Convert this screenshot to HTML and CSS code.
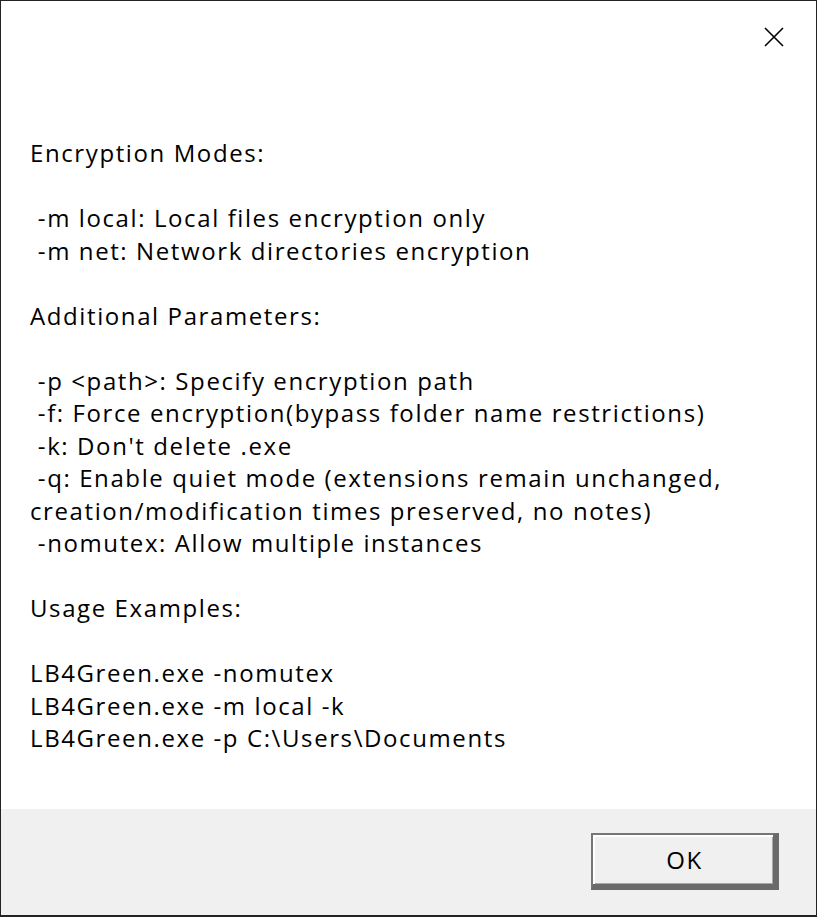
FILE: index.html
```html
<!DOCTYPE html>
<html lang="en">
<head>
<meta charset="utf-8">
<title>LB4Green</title>
<link rel="stylesheet" href="styles.css">
</head>
<body>
<div class="window">
  <div class="content">
    <div class="titlebar">
      <button class="close" aria-label="Close">
        <svg width="20" height="20" viewBox="0 0 20 20"><path d="M1 1 L19 19 M19 1 L1 19" stroke="#000" stroke-width="1.6" fill="none"/></svg>
      </button>
    </div>
    <div class="message">Encryption Modes:

 -m local: Local files encryption only
 -m net: Network directories encryption

Additional Parameters:

 -p &lt;path&gt;: Specify encryption path
 -f: Force encryption(bypass folder name restrictions)
 -k: Don't delete .exe
 -q: Enable quiet mode (extensions remain unchanged,
creation/modification times preserved, no notes)
 -nomutex: Allow multiple instances

Usage Examples:

LB4Green.exe -nomutex
LB4Green.exe -m local -k
LB4Green.exe -p C:\Users\Documents</div>
  </div>
  <div class="footer">
    <button class="ok">OK</button>
  </div>
</div>
</body>
</html>
```
FILE: styles.css
```css
html, body {
  margin: 0;
  padding: 0;
}
body {
  background: #232323;
  width: 817px;
  height: 917px;
  overflow: hidden;
}
.window {
  margin: 1px 1px 0 1px;
  width: 815px;
  height: 914px;
  display: flex;
  flex-direction: column;
  font-family: "Open Sans", "Noto Sans", sans-serif;
}
.content {
  background: #ffffff;
  height: 808px;
  display: flex;
  flex-direction: column;
}
.titlebar {
  height: 136px;
  display: flex;
  justify-content: flex-end;
  align-items: flex-start;
}
.close {
  margin: 26px 32px 0 0;
  padding: 0;
  border: 0;
  background: transparent;
  width: 20px;
  height: 20px;
  display: flex;
}
.message {
  white-space: pre;
  padding-left: 29px;
  font-size: 24px;
  font-weight: 500;
  letter-spacing: 1.6px;
  line-height: 32.5px;
  color: #000;
}
.footer {
  background: #f0f0f0;
  flex: 1;
  display: flex;
  justify-content: flex-end;
  align-items: flex-start;
  padding: 24px 37px 0 0;
}
.ok {
  box-sizing: border-box;
  width: 188px;
  height: 57px;
  background: #f0f0f0;
  border-style: solid;
  border-width: 2px 6px 6px 2px;
  border-color: #767676 #6a6a6a #6a6a6a #767676;
  box-shadow: inset 2px 2px 0 #ffffff, inset -1px -1px 0 #a8a8a8;
  font-family: "Open Sans", "Noto Sans", sans-serif;
  font-size: 24px;
  font-weight: 500;
  letter-spacing: 1.6px;
  color: #000;
  padding: 0 0 0 3px;
}
```
